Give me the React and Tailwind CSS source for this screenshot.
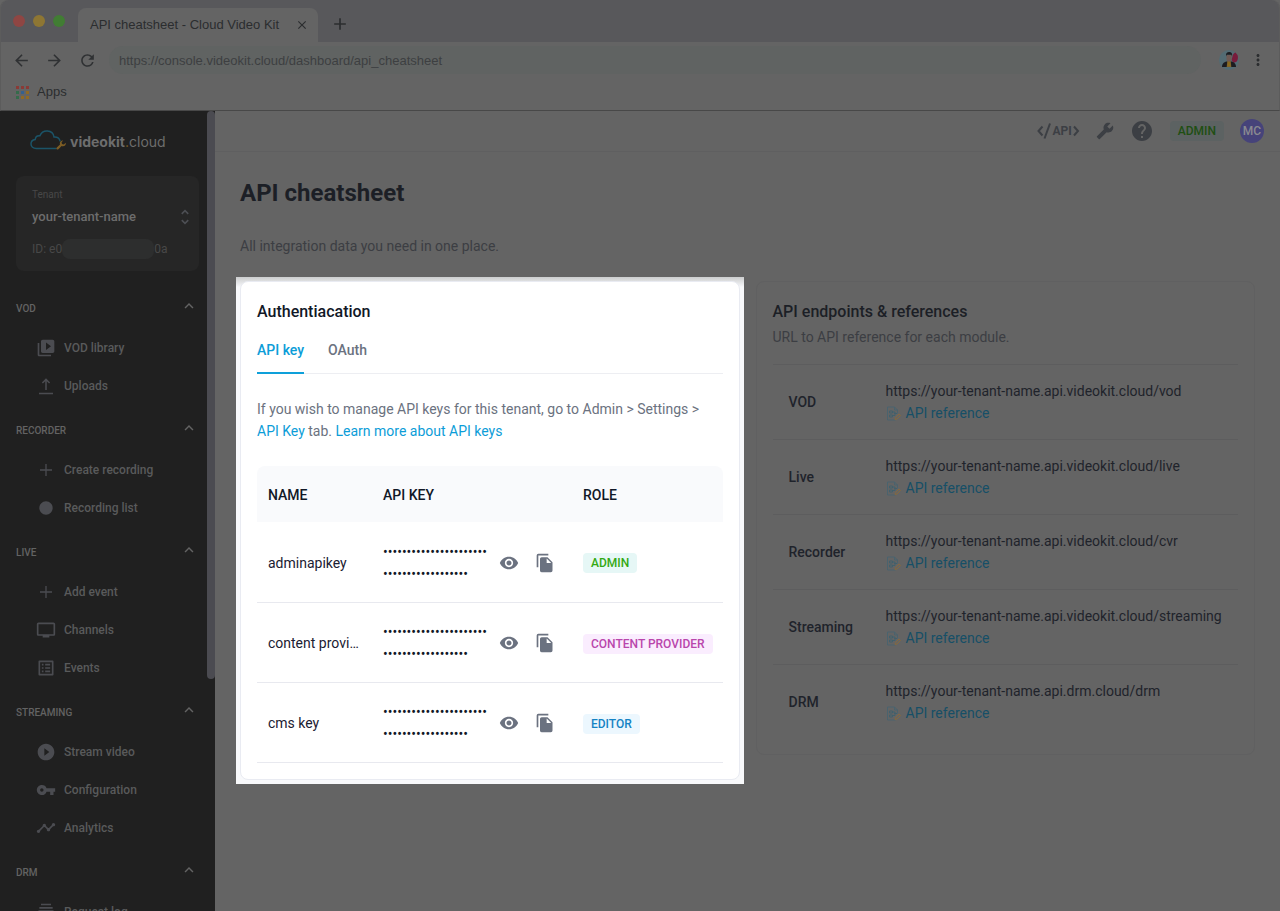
import React from "react";
import {
  MdAdd,
  MdArrowBack,
  MdArrowForward,
  MdBuild,
  MdCircle,
  MdClose,
  MdExpandLess,
  MdHelp,
  MdMoreVert,
  MdOutlineListAlt,
  MdPlayCircleFilled,
  MdRefresh,
  MdSubscriptions,
  MdTimeline,
  MdTv,
  MdUnfoldMore,
  MdVideoLibrary,
  MdVisibility,
  MdVpnKey,
} from "react-icons/md";

function ThinPlus() {
  return (
    <svg viewBox="0 0 20 20" className="size-5" fill="none" stroke="currentColor" strokeWidth="1.3" aria-hidden="true">
      <path d="M10 4v12M4 10h12" />
    </svg>
  );
}

function UploadIcon() {
  return (
    <svg viewBox="0 0 20 20" className="size-5" fill="none" stroke="currentColor" strokeWidth="1.5" aria-hidden="true">
      <path d="M10 14V3.5M6.4 7 10 3.4 13.6 7M3 17.5h14" />
    </svg>
  );
}

function CopyIcon() {
  return (
    <svg viewBox="0 0 24 24" className="size-5" fill="currentColor" aria-hidden="true">
      <path d="M16 1H4a2 2 0 0 0-2 2v14h2V3h12z" />
      <path fillRule="evenodd" d="M15 5H8a2 2 0 0 0-2 2v14c0 1.100.9 2 2 2h11a2 2 0 0 0 2-2V11zm-1 1.500V12h5.500z" />
    </svg>
  );
}

const sections = [
  {
    title: "VOD",
    items: [
      { label: "VOD library", icon: <MdVideoLibrary className="size-5" /> },
      { label: "Uploads", icon: <UploadIcon /> },
    ],
  },
  {
    title: "RECORDER",
    items: [
      { label: "Create recording", icon: <ThinPlus /> },
      { label: "Recording list", icon: <MdCircle className="size-4" /> },
    ],
  },
  {
    title: "LIVE",
    items: [
      { label: "Add event", icon: <ThinPlus /> },
      { label: "Channels", icon: <MdTv className="size-5" /> },
      { label: "Events", icon: <MdOutlineListAlt className="size-5" /> },
    ],
  },
  {
    title: "STREAMING",
    items: [
      { label: "Stream video", icon: <MdPlayCircleFilled className="size-5" /> },
      { label: "Configuration", icon: <MdVpnKey className="size-5" /> },
      { label: "Analytics", icon: <MdTimeline className="size-5" /> },
    ],
  },
  {
    title: "DRM",
    items: [{ label: "Request log", icon: <MdSubscriptions className="size-5" /> }],
  },
];

const keys = [
  { name: "adminapikey", role: "ADMIN", badge: "bg-[#e6f7f6] text-[#33a913]" },
  { name: "content provider key", role: "CONTENT PROVIDER", badge: "bg-[#faedfe] text-[#b946ac]" },
  { name: "cms key", role: "EDITOR", badge: "bg-[#ecf7fe] text-[#1583c4]" },
];

const endpoints = [
  { name: "VOD", url: "https://your-tenant-name.api.videokit.cloud/vod" },
  { name: "Live", url: "https://your-tenant-name.api.videokit.cloud/live" },
  { name: "Recorder", url: "https://your-tenant-name.api.videokit.cloud/cvr" },
  { name: "Streaming", url: "https://your-tenant-name.api.videokit.cloud/streaming" },
  { name: "DRM", url: "https://your-tenant-name.api.drm.cloud/drm" },
];

function AppsIcon() {
  const colors = ["#8a3a36", "#8a3a36", "#8a3a36", "#356b4b", "#34618f", "#8f6a26", "#356b4b", "#8f6a26", "#8f6a26"];
  return (
    <svg viewBox="0 0 13 13" className="size-[13px]" aria-hidden="true">
      {colors.map((c, i) => (
        <rect key={i} x={(i % 3) * 5} y={Math.floor(i / 3) * 5} width="3" height="3" fill={c} />
      ))}
    </svg>
  );
}

function ProfilePicture() {
  return (
    <svg viewBox="0 0 20 20" className="size-5" aria-hidden="true">
      <circle cx="10" cy="10" r="10" fill="#536b73" />
      <path d="M13.500 6.500c.2-2 1.500-3.500 3-4l2 2.500c.8 2 .5 4.500-.7 6.500l-3.300 1.500-2-3z" fill="#781c3c" />
      <path d="M3 17c0-3.500 2-4.800 4.500-5.500h5C15 12.200 17 13.500 17 17z" fill="#1b1c20" />
      <path d="M8.300 11h3.400l.6 6H7.700z" fill="#80652a" />
      <path d="M9.300 11.500h1.400l.3 4-1 1-1-1z" fill="#8d6c1c" />
      <path d="M7.500 5h5v4c0 1.600-1 2.600-2.500 2.600S7.500 10.600 7.500 9z" fill="#6d5a55" />
      <path d="M7 6.200C6.600 3.200 8 2 10.200 2c2.300 0 3.300 1.300 2.800 4.200l-.6-1.400H7.800z" fill="#1b1c20" />
    </svg>
  );
}

function BrowserChrome() {
  return (
    <div className="shrink-0 rounded-t-lg border-x border-b border-x-[#5c5c5c] border-b-[#484848] bg-[#646464] font-['Liberation_Sans',sans-serif] text-[#2b2d2f]">
      <div className="flex h-[42px] items-end rounded-t-lg bg-[#58585b]">
        <div className="flex h-full w-[77px] items-center gap-2 pl-3">
          <span className="size-3 rounded-full bg-[#8f4643]" />
          <span className="size-3 rounded-full bg-[#8e7633]" />
          <span className="size-3 rounded-full bg-[#417d33]" />
        </div>
        <div className="flex h-[34px] w-60 items-center justify-between rounded-t-lg bg-[#646464] px-3">
          <span className="text-[13px]">API cheatsheet - Cloud Video Kit</span>
          <button type="button" aria-label="Close tab" className="-mr-1 flex size-4 items-center justify-center">
            <MdClose className="size-[14px]" />
          </button>
        </div>
        <button type="button" aria-label="New tab" className="mb-2 ml-3 flex size-5 items-center justify-center">
          <MdAdd className="size-5" />
        </button>
      </div>
      <div className="flex h-9 items-center pr-3 pl-[11px]">
        <div className="flex gap-[14px] text-[#2f3133]">
          <button type="button" aria-label="Back"><MdArrowBack className="size-[19px]" /></button>
          <button type="button" aria-label="Forward"><MdArrowForward className="size-[19px]" /></button>
          <button type="button" aria-label="Reload"><MdRefresh className="size-[19px]" /></button>
        </div>
        <input
          aria-label="Address"
          defaultValue="https://console.videokit.cloud/dashboard/api_cheatsheet"
          className="ml-3 h-7 flex-1 rounded-full bg-[#606362] px-[10px] text-[13px] text-[#3d3f41] outline-none"
        />
        <button type="button" aria-label="Profile" className="ml-[18px]"><ProfilePicture /></button>
        <button type="button" aria-label="Browser menu" className="ml-[10px]"><MdMoreVert className="size-[18px]" /></button>
      </div>
      <div className="flex h-8 items-center gap-2 px-[15px] pb-1">
        <AppsIcon />
        <a href="#apps" className="text-[13px]">Apps</a>
      </div>
    </div>
  );
}

function Logo() {
  return (
    <a href="#home" className="ml-[30px] flex h-6 items-center gap-1 font-['Inter',sans-serif] text-sm text-[#6d6d6d]">
      <svg viewBox="0 0 36 20" className="-mt-1 h-5 w-9" fill="none" aria-hidden="true">
        <path
          d="M26 18.500H6.200C3.200 18.500 1 16.600 1 14c0-2.500 1.800-4.200 4.200-4.500.3-2.500 2.200-4 4.700-3.700C11.200 2.500 14 .8 17.500 1c3.600.2 6 2.600 6.500 6 3.200-.2 5.300 1.300 6 3.800"
          stroke="#1b5468"
          strokeWidth="1.5"
          strokeLinecap="round"
        />
        <path
          d="M35.800 12.700c.3 2-1 3.600-2.900 3.600-.5 0-1-.1-1.300-.2l-3.200 3.100c-.5.500-1.300.5-1.700 0-.4-.4-.4-1.100.1-1.600l3.200-3.100c-.7-2.200.7-4.300 3.200-4.100l-1.600 1.900.4 1.700 1.800.4z"
          fill="#7d5d24"
        />
      </svg>
      <span>
        <span className="font-bold">videokit</span>
        <span className="text-[#7d5d24]">.</span>
        <span>cloud</span>
      </span>
    </a>
  );
}

function Sidebar() {
  return (
    <aside className="flex w-[215px] shrink-0 overflow-hidden bg-[#202020]">
      <div className="flex min-w-0 flex-1 flex-col pt-[21px]">
        <Logo />
        <button
          type="button"
          className="mt-6 mr-2 ml-4 flex shrink-0 flex-col rounded-lg bg-[#262626] px-4 pt-[11px] pb-3 text-left text-[#484848]"
        >
          <span className="text-[10px] leading-4">Tenant</span>
          <span className="mt-1 flex w-full items-center justify-between text-[13px] leading-5 font-medium text-[#6d6d6d]">
            your-tenant-name
            <MdUnfoldMore className="-mr-3 size-5 text-[#4d4f54]" />
          </span>
          <span className="mt-3 flex items-center text-xs leading-5">
            ID: e0
            <span className="h-5 w-[92px] rounded-lg bg-[#2d2e2e]" />
            0a
          </span>
        </button>
        <nav className="mt-3" aria-label="Main">
          {sections.map((section) => (
            <section key={section.title}>
              <button
                type="button"
                aria-expanded="true"
                className="flex h-[46px] w-full items-center justify-between pt-1 pr-[9px] pl-4 text-[10px] font-medium text-[#636363]"
              >
                {section.title}
                <MdExpandLess className="mb-1 size-[18px]" />
              </button>
              <ul>
                {section.items.map((item) => (
                  <li key={item.label}>
                    <a
                      href={"#" + item.label.toLowerCase().replace(" ", "-")}
                      className="flex h-[38px] items-center gap-2 pl-9 text-xs font-medium text-[#595a5b]"
                    >
                      <span className="flex size-5 items-center justify-center text-[#4b4c51]">{item.icon}</span>
                      {item.label}
                    </a>
                  </li>
                ))}
              </ul>
            </section>
          ))}
        </nav>
      </div>
      <div className="w-2 shrink-0">
        <div className="h-[71%] rounded-full bg-[#4b4b51]" />
      </div>
    </aside>
  );
}

function TopBar() {
  return (
    <header className="flex h-[41px] shrink-0 items-center justify-end border-b border-[#5f5f60] pr-4 text-[#3c3f44]">
      <a href="#api" aria-label="API" className="flex items-center text-xs font-bold">
        <svg viewBox="0 0 16 18" className="h-[18px] w-4" fill="none" stroke="currentColor" strokeWidth="2" aria-hidden="true">
          <path d="M6.500 4.500 2.500 9l4 4.500M14 1.500 8.500 16.500" />
        </svg>
        API
        <svg viewBox="0 0 8 18" className="h-[18px] w-2" fill="none" stroke="currentColor" strokeWidth="2" aria-hidden="true">
          <path d="m2 4.500 4 4.500-4 4.500" />
        </svg>
      </a>
      <button type="button" aria-label="Tools" className="ml-4">
        <MdBuild className="size-[18px] -scale-x-100" />
      </button>
      <button type="button" aria-label="Help" className="ml-4">
        <MdHelp className="size-6" />
      </button>
      <span className="ml-4 rounded-sm bg-[#5c6262] px-2 text-xs leading-5 font-medium text-[#204f12]">ADMIN</span>
      <button
        type="button"
        aria-label="Account MC"
        className="ml-4 flex size-6 items-center justify-center rounded-full bg-[#46437a] text-xs font-medium text-[#8a8a90]"
      >
        MC
      </button>
    </header>
  );
}

function AuthenticationCard() {
  return (
    <section className="-m-1 self-start bg-[#f8f9fb] bg-linear-to-b from-[#cccdce] from-0% to-[#f8f9fb] to-[10px] p-1">
      <div className="rounded-lg border border-[#e9ebf2] bg-white px-4 pt-[18px] pb-4 text-sm text-[#6b7280]">
        <h2 className="text-base leading-6 font-medium text-[#111827]">Authentiacation</h2>
        <div role="tablist" className="mt-[15px] flex gap-6 border-b border-[#edeef2] leading-[22px] font-medium">
          <button
            type="button"
            role="tab"
            aria-selected="true"
            className="-mb-px border-b-2 border-[#0ea0da] pb-[11px] text-[#0c9dd8]"
          >
            API key
          </button>
          <button type="button" role="tab" aria-selected="false" className="-mb-px border-b-2 border-transparent pb-[11px]">
            OAuth
          </button>
        </div>
        <p className="mt-6 leading-[22px]">
          If you wish to manage API keys for this tenant, go to Admin &gt; Settings &gt;{" "}
          <a href="#settings" className="text-[#0c9dd8]">API Key</a> tab.{" "}
          <a href="#learn" className="text-[#0c9dd8]">Learn more about API keys</a>
        </p>
        <table className="mt-6 w-full table-fixed text-left text-[#1a2032]">
          <thead>
            <tr className="h-14 text-[#111827]">
              <th scope="col" className="w-[115px] rounded-tl-lg bg-[#f9fafc] pt-[2px] pl-[11px] font-medium">NAME</th>
              <th scope="col" className="w-[200px] bg-[#f9fafc] pt-[2px] pl-[11px] font-medium">API KEY</th>
              <th scope="col" className="rounded-tr-lg bg-[#f9fafc] pt-[2px] pl-[11px] font-medium">ROLE</th>
            </tr>
          </thead>
          <tbody>
            {keys.map((row) => (
              <tr key={row.name} className="h-20 border-b border-[#e8e9ef]">
                <td className="truncate pt-[2px] pr-2 pl-[11px]">{row.name}</td>
                <td className="pt-[2px] pl-[11px]">
                  <div className="flex items-center text-[#6b7280]">
                    <span className="w-[104px] leading-[22px] break-all text-[#111827]">{"•".repeat(40)}</span>
                    <button type="button" aria-label={"Show key " + row.name} className="ml-3">
                      <MdVisibility className="size-5" />
                    </button>
                    <button type="button" aria-label={"Copy key " + row.name} className="ml-4">
                      <CopyIcon />
                    </button>
                  </div>
                </td>
                <td className="pt-[2px] pl-[11px] whitespace-nowrap">
                  <span className={"inline-block rounded-sm px-2 text-xs leading-5 font-medium " + row.badge}>
                    {row.role}
                  </span>
                </td>
              </tr>
            ))}
          </tbody>
        </table>
      </div>
    </section>
  );
}

function DocIcon() {
  return (
    <svg viewBox="0 0 15 15" className="size-[15px]" fill="none" aria-hidden="true">
      <path d="M11.500 7.500V4L8.500 1H1.500v13h8M8.500 1v3h3" stroke="#4a636e" strokeWidth="1" />
      <path d="M3.500 5h3v2h-3zM3.500 9h3v2h-3zM6.500 6h2.500v3.500H6.500M8 7.500h3" stroke="#41606d" strokeWidth="1" />
      <path d="m9 13.500.5-2L13 8l1.500 1.500L11 13z" stroke="#84693f" strokeWidth="1" />
    </svg>
  );
}

function EndpointsCard() {
  return (
    <section className="self-start rounded-lg border border-[#606061] px-4 pt-[18px] pb-[14px] text-sm text-[#3c3e43]">
      <h2 className="text-base leading-6 font-medium text-[#1c1f26]">API endpoints &amp; references</h2>
      <p className="mt-[2px] leading-[22px]">URL to API reference for each module.</p>
      <table className="mt-4 w-full table-fixed text-left text-[#1f232b]">
        <tbody>
          {endpoints.map((row) => (
            <tr key={row.name} className="h-[75px] border-t border-[#5d5d5e]">
              <th scope="row" className="w-[113px] pl-4 font-medium">{row.name}</th>
              <td className="whitespace-nowrap">
                <span className="block leading-[22px]">{row.url}</span>
                <a href={"#" + row.name.toLowerCase()} className="flex items-center gap-[5px] leading-[22px] text-[#164f67]">
                  <DocIcon />
                  API reference
                </a>
              </td>
            </tr>
          ))}
        </tbody>
      </table>
    </section>
  );
}

export default function App() {
  return (
    <div className="flex h-screen flex-col overflow-hidden bg-[#646464] font-['Roboto',sans-serif]">
      <BrowserChrome />
      <div className="flex min-h-0 flex-1">
        <Sidebar />
        <div className="flex min-w-0 flex-1 flex-col">
          <TopBar />
          <main className="min-h-0 flex-1 overflow-hidden px-[25px] pt-[25px]">
            <h1 className="text-2xl leading-8 font-bold text-[#1c1f26]">API cheatsheet</h1>
            <p className="mt-[27px] text-sm leading-5 text-[#3c3e43]">All integration data you need in one place.</p>
            <div className="mt-[25px] grid grid-cols-2 gap-4">
              <AuthenticationCard />
              <EndpointsCard />
            </div>
          </main>
        </div>
      </div>
    </div>
  );
}
